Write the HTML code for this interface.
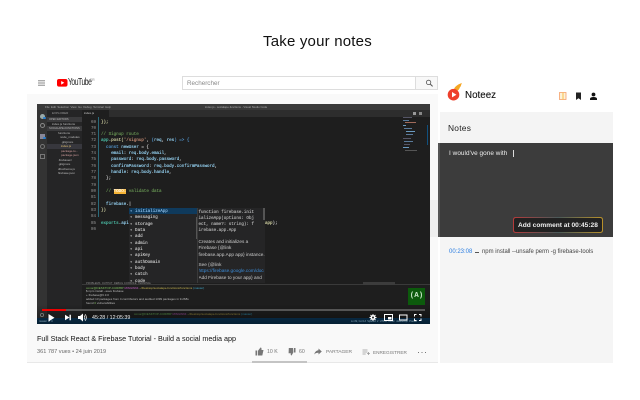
<!DOCTYPE html>
<html><head><meta charset="utf-8"><style>
*{box-sizing:border-box}
html,body{margin:0;padding:0}
body{width:640px;height:400px;overflow:hidden;background:#fff;position:relative;font-family:"Liberation Sans",sans-serif}
.a{position:absolute;white-space:pre}
.c{font-family:"Liberation Mono",monospace;font-size:4.22px;line-height:6.33px;color:#9cdcfe;-webkit-text-stroke:.12px}
.n{color:#7d7d7d;width:12px;text-align:right}
.s{font-size:3px;line-height:3px;color:#bbb}
.m{font-family:"Liberation Mono",monospace;font-size:4.22px;line-height:6.33px;color:#ccc;-webkit-text-stroke:.12px}
.d{font-size:4.7px;line-height:6.4px;color:#ccc}
b{font-weight:normal}
.k{color:#569cd6}.y{color:#dcdcaa}.o{color:#ce9178}.g{color:#6a9955}.t{color:#4ec9b0}.w{color:#d4d4d4}
.mm{position:absolute;height:1.4px}
</style></head><body>
<div class="a" style="left:263px;top:33px;font-size:15px;letter-spacing:.2px;color:#111;line-height:18px">Take your notes</div>

<div class="a" style="left:27px;top:94px;width:411px;height:268px;background:#f9f9f9"></div>
<div class="a" style="left:38px;top:80px;width:7px;height:6px;background:linear-gradient(#aaa 0 1px,#ddd 1px 2.5px,#aaa 2.5px 3.5px,#ddd 3.5px 5px,#aaa 5px)"></div>
<svg class="a" style="left:57px;top:78px" width="11" height="10"><rect y="1" width="10.500" height="7.600" rx="2" fill="#f00"/><path d="M4.200 3v3.600l3.100-1.800z" fill="#fff"/></svg>
<div class="a" style="left:68px;top:77px;font-size:10px;letter-spacing:-.7px;color:#222;transform:scaleX(.68);transform-origin:0 0;line-height:12px">YouTube</div>
<div class="a" style="left:90px;top:78px;font-size:3.500px;line-height:5px;color:#888">FR</div>
<div class="a" style="left:182px;top:76px;width:234px;height:14px;border:1px solid #ddd;background:#fff"></div>
<div class="a" style="left:187px;top:78.500px;font-size:6.300px;color:#888;line-height:10px">Rechercher</div>
<div class="a" style="left:415px;top:76px;width:23px;height:14px;border:1px solid #ddd;background:#f8f8f8"></div>
<svg class="a" style="left:425px;top:79px" width="9" height="9"><circle cx="3.600" cy="3.400" r="2.200" fill="none" stroke="#555" stroke-width=".8"/><path d="M5.200 5l2.400 2.400" stroke="#555"/></svg>

<div id="v" class="a" style="left:37px;top:104px;width:393px;height:220px;background:#1e1e1e;overflow:hidden;filter:blur(.25px)">
 <div class="a" style="left:0;top:0;width:393px;height:6px;background:#3a3a3a"></div>
 <div class="a s" style="left:8px;top:1.500px;font-size:2.800px;color:#aaa">File  Edit  Selection  View  Go  Debug  Terminal  Help</div>
 <div class="a s" style="left:168px;top:1.500px;font-size:2.800px;color:#aaa">index.js - socialape-functions - Visual Studio Code</div>
 <div class="a" style="left:0;top:6px;width:10px;height:208px;background:#333"></div>
 <div class="a" style="left:10px;top:6px;width:35px;height:208px;background:#252526"></div>
 <div class="a" style="left:45px;top:6px;width:348px;height:7px;background:#2d2d2d"></div>
 <div class="a" style="left:45px;top:6px;width:27px;height:7px;background:#1e1e1e"></div>
 <div class="a s" style="left:47px;top:8px;color:#ccc">index.js</div>
 <div class="a" style="left:2.500px;top:9.500px;width:5px;height:5px;border-radius:50%;background:#9aa"></div>
 <div class="a" style="left:6px;top:12.500px;width:2.500px;height:2.500px;border-radius:50%;background:#2a80d0"></div>
 <div class="a" style="left:2.500px;top:18.500px;width:5px;height:5px;border-radius:50%;border:1px solid #888"></div>
 <div class="a" style="left:2.500px;top:29.500px;width:5px;height:5px;background:#889"></div>
 <div class="a" style="left:6px;top:32.500px;width:2.500px;height:2.500px;border-radius:50%;background:#2a80d0"></div>
 <div class="a" style="left:2.500px;top:39.500px;width:5px;height:5px;border-radius:50%;border:1px solid #777"></div>
 <div class="a" style="left:2.500px;top:49.500px;width:5px;height:5px;border:1px solid #777"></div>
 <div class="a s" style="left:15px;top:7.500px;color:#999">EXPLORER</div>
 <div class="a" style="left:10px;top:13px;width:35px;height:4.500px;background:#3a3a3c"></div>
 <div class="a s" style="left:12px;top:13.500px;font-size:2.600px">OPEN EDITORS</div>
 <div class="a s" style="left:15px;top:18.500px">index.js functions</div>
 <div class="a" style="left:10px;top:22px;width:35px;height:4.500px;background:#3a3a3c"></div>
 <div class="a s" style="left:12px;top:22.500px;font-size:2.600px">SOCIALAPE-FUNCTIONS</div>
 <div class="a s" style="left:21px;top:27.500px">functions</div>
 <div class="a s" style="left:23px;top:31.500px">node_modules</div>
 <div class="a s" style="left:24px;top:36.500px">.gitignore</div>
 <div class="a" style="left:10px;top:40px;width:35px;height:4.500px;background:#37373d"></div>
 <div class="a s" style="left:24px;top:40.500px;color:#e0c070">index.js</div>
 <div class="a s" style="left:24px;top:45.500px;color:#c99">package-lo...</div>
 <div class="a s" style="left:24px;top:49.500px;color:#c99">package.json</div>
 <div class="a s" style="left:21px;top:54.500px">.firebaserc</div>
 <div class="a s" style="left:21px;top:58.500px">.gitignore</div>
 <div class="a s" style="left:21px;top:63.500px">dbschema.js</div>
 <div class="a s" style="left:21px;top:67.500px">firebase.json</div>

 <div class="a" style="left:61px;top:13px;width:1px;height:100px;background:#2a6a7a"></div>
 <div class="a c n" style="left:47px;top:15.500px">69
70
71
72
73
74
75
76
77
78
79
80
81
82
83
84
85
86</div>
 <div class="a c" style="left:64px;top:15.500px"><b class="y">});</b>

<b class="g">// Signup route</b>
<b class="t">app</b><b class="w">.</b><b class="y">post(</b><b class="o">'/signup'</b><b class="w">, </b><b class="k">(</b>req<b class="w">, </b>res<b class="k">) =&gt; {</b>
  <b class="k">const</b> newUser <b class="w">= {</b>
    email<b class="w">:</b> req<b class="w">.</b>body<b class="w">.</b>email<b class="w">,</b>
    password<b class="w">:</b> req<b class="w">.</b>body<b class="w">.</b>password<b class="w">,</b>
    confirmPassword<b class="w">:</b> req<b class="w">.</b>body<b class="w">.</b>confirmPassword<b class="w">,</b>
    handle<b class="w">:</b> req<b class="w">.</b>body<b class="w">.</b>handle<b class="w">,</b>
  <b class="w">};</b>

  <b class="g">// <b style="background:#f5b335;color:#fff">TODO:</b> validate data</b>

  firebase<b class="w">.|</b>
<b class="y">})</b>

<b class="t">exports</b><b class="w">.</b>api                                                      <b class="y">app</b><b class="w">);</b></div>

 <div class="a" style="left:92px;top:104px;width:69px;height:75px;background:#252526"></div>
 <div class="a" style="left:92px;top:104px;width:68px;height:6.300px;background:#0f3a5c"></div>
 <div class="a m" style="left:93px;top:105px"><b style="color:#8fc0ea">▫ initializeApp</b>
▫ messaging
▫ storage
▫ Data
▫ add
▫ admin
▫ api
▫ apiKey
▫ authDomain
▫ body
▫ catch
▫ code</div>
 <div class="a" style="left:160px;top:104px;width:68px;height:75px;background:#252526;border-left:.5px solid #3a3a3a"></div>
 <div class="a" style="left:158.500px;top:113px;width:1.500px;height:22px;background:#555"></div>
 <div class="a" style="left:226px;top:104px;width:1.500px;height:12px;background:#555"></div>
 <div class="a m" style="left:161.500px;top:105.500px;color:#bbb">function firebase.init
ializeApp(options: Obj
ect, name?: string): f
irebase.app.App</div>
 <div class="a d" style="left:161.500px;top:135px">Creates and initializes a
Firebase {@link
firebase.app.App app} instance.</div>
 <div class="a d" style="left:161.500px;top:157.500px">See {@link</div>
 <div class="a d" style="left:161.500px;top:164px;width:65px;overflow:hidden;color:#3c8cd8">https://firebase.google.com/docs</div>
 <div class="a d" style="left:161.500px;top:170.500px;width:65px;overflow:hidden">Add Firebase to your app} and</div>

 <div class="a" style="left:45px;top:180px;width:348px;height:.5px;background:#3a3a3a"></div>
 <div class="a s" style="left:49px;top:178px;font-size:2.600px;color:#888">PROBLEMS  OUTPUT  DEBUG CONSOLE  TERMINAL</div>
 <div class="a" style="left:326px;top:177.500px;width:32px;height:3.500px;background:#3c3c3c"></div>
 <div class="a s" style="left:49px;top:182.500px;color:#7fbf5f;font-size:3px;line-height:3.900px">conor@DESKTOP-CUR88P <b style="color:#c060c0">MINGW64</b> <b style="color:#c0b050">~/Desktop/socialape-functions/functions</b> <b style="color:#40a0c0">(master)</b>
<b style="color:#bbb">$ npm install --save firebase</b>
<b style="color:#bbb">+ firebase@6.3.0</b>
<b style="color:#bbb">added 13 packages from 4 contributors and audited 1399 packages in 9.268s</b>
<b style="color:#bbb">found <b style="color:#7fbf5f">0</b> vulnerabilities</b></div>
 <div class="a s" style="left:97px;top:209px;color:#5f9f4f">conor@DESKTOP-CUR88P <b style="color:#a050a0">MINGW64</b> <b style="color:#a09040">~/Desktop/socialape-functions/functions</b> <b style="color:#3090b0">(master)</b></div>

 <div class="a" style="left:0;top:214px;width:393px;height:6px;background:#0b3a5e"></div>
 <div class="a" style="left:0;top:200px;width:393px;height:20px;background:linear-gradient(transparent,rgba(0,0,0,.45))"></div>
 <div class="a s" style="left:2px;top:216px;font-size:2.600px;color:#8ab">master  0  0</div>
 <div class="a s" style="left:314px;top:216px;color:#8ab;font-size:2.500px">Ln 82, Col 13  Spaces: 2  UTF-8  CRLF  JavaScript  Prettier</div>
 <div class="a" style="left:371px;top:184px;width:17px;height:17px;background:#0c5a0c;color:#c8e6c8;font:bold 7.500px/17px 'Liberation Mono',monospace;text-align:center">(A)</div>
 <div class="a" style="left:366px;top:13px;width:15px;height:35px">
<div class="mm" style="left:0;top:0;width:9px;background:#556"></div><div class="mm" style="left:0;top:3px;width:6px;background:#5a7a9a"></div><div class="mm" style="left:2px;top:5px;width:11px;background:#a06a5a"></div><div class="mm" style="left:0;top:8px;width:3px;background:#6a9ac0"></div><div class="mm" style="left:1px;top:11px;width:8px;background:#5a7a9a"></div><div class="mm" style="left:3px;top:14px;width:9px;background:#6a9ac0"></div><div class="mm" style="left:3px;top:17px;width:7px;background:#5a7a9a"></div><div class="mm" style="left:0;top:21px;width:8px;background:#556"></div><div class="mm" style="left:1px;top:24px;width:9px;background:#5a7a9a"></div><div class="mm" style="left:1px;top:27px;width:6px;background:#556"></div><div class="mm" style="left:0;top:30px;width:6px;background:#6a9ac0"></div><div class="mm" style="left:2px;top:33px;width:12px;background:#555"></div></div>
 <div class="a" style="left:389.500px;top:21px;width:1.500px;height:20px;background:#10507e"></div>
 <div class="a" style="left:376px;top:7.500px;width:3px;height:3px;background:#999"></div>
 <div class="a" style="left:382px;top:7.500px;width:3px;height:3px;background:#888"></div>

 <div class="a" style="left:5px;top:205.300px;width:383px;height:1.400px;background:#555"></div>
 <div class="a" style="left:5px;top:205.300px;width:24px;height:1.400px;background:#e00"></div>
 <svg class="a" style="left:0;top:208px" width="393" height="12">
  <circle cx="5" cy="3" r="1.600" fill="none" stroke="#777" stroke-width=".9"/>
  <path d="M11.500 2v7.500l6-3.750z" fill="#fff"/>
  <path d="M28 2.700v5.600l4.500-2.800zM32.500 2.700h1.400v5.600h-1.400z" fill="#fff"/>
  <path d="M41 4h2l3-2.500v8l-3-2.500h-2z" fill="#fff"/>
  <path d="M47 3.500a2.800 2.800 0 0 1 0 4M48 2.300a4.400 4.400 0 0 1 0 6.400" stroke="#fff" stroke-width=".7" fill="none"/>
  <path d="M336 2v7M332.500 5.500h7M333.500 3l5 5M338.500 3l-5 5" stroke="#fff" stroke-width=".9"/>
  <circle cx="336" cy="5.500" r="2.500" fill="#fff"/><circle cx="336" cy="5.500" r="1" fill="#222"/>
  <rect x="347.500" y="2.500" width="8" height="6" fill="none" stroke="#fff"/><rect x="351" y="5" width="3.500" height="2.500" fill="#fff"/>
  <rect x="362.500" y="3" width="7.500" height="5" fill="none" stroke="#fff"/>
  <path d="M377.500 4.500v-2h2M382 2.500h2v2M377.500 6.500v2h2M382 8.500h2v-2" stroke="#fff" fill="none"/>
 </svg>
 <div class="a" style="left:55px;top:209.500px;color:#eee;font-size:5.300px;line-height:8px">45:28 / 12:05:39</div>
</div>

<div class="a" style="left:37px;top:332.500px;font-size:7.200px;color:#111;line-height:12px">Full Stack React &amp; Firebase Tutorial - Build a social media app</div>
<div class="a" style="left:37px;top:348px;font-size:5.600px;color:#666;line-height:8px">361 787 vues • 24 juin 2019</div>
<svg class="a" style="left:255px;top:347px" width="10" height="10"><path d="M.5 3.500h1.700v5H.5zM3 8.500V3.800L5.500.5c1 0 1.200 1 1 2.500h2L7.300 8.500z" fill="#777"/></svg>
<div class="a" style="left:267px;top:348.500px;font-size:5.200px;color:#777;line-height:7px">10 K</div>
<svg class="a" style="left:288px;top:347px" width="10" height="10"><path d="M.8 1h4.300l.3 4.200L3.600 8.500c-1 0-1-1-.8-2.200H.6zM6 1h1.500v4.500H6z" fill="#777"/></svg>
<div class="a" style="left:299px;top:348.500px;font-size:5.200px;color:#777;line-height:7px">60</div>
<svg class="a" style="left:314px;top:348px" width="8" height="7"><path d="M4.500.5l3.300 3-3.300 3V4.800C2.500 4.800 1.200 5.300.3 6.500.6 4.300 2 2.500 4.500 2.200z" fill="#777"/></svg>
<div class="a" style="left:326px;top:348.500px;font-size:4.900px;color:#777;line-height:7px">PARTAGER</div>
<svg class="a" style="left:362px;top:349px" width="8" height="6"><path d="M.5 1h5M.5 3h5M.5 5h3.200M6.500 3v3M5 4.500h3" stroke="#999" stroke-width=".8"/></svg>
<div class="a" style="left:373px;top:348.500px;font-size:4.700px;color:#777;line-height:7px">ENREGISTRER</div>
<div class="a" style="left:418px;top:352px;width:8px;height:1.200px;background:linear-gradient(90deg,#777 0 1.200px,transparent 1.200px 3.400px,#777 3.400px 4.600px,transparent 4.600px 6.800px,#777 6.800px)"></div>
<div class="a" style="left:27px;top:362px;width:411px;height:1px;background:#e8e8e8"></div>
<div class="a" style="left:252px;top:361px;width:55px;height:2px;background:#c4c4c4"></div>
<div class="a" style="left:430px;top:200px;width:8px;height:37px;background:#efefef"></div>
<div class="a" style="left:438px;top:143px;width:2px;height:94px;background:#555"></div>

<div class="a" style="left:440px;top:112px;width:173px;height:31px;background:#f4f4f4"></div>
<div class="a" style="left:440px;top:143px;width:173px;height:94px;background:#3c3c3c"></div>
<div class="a" style="left:440px;top:237px;width:173px;height:126px;background:#f5f5f5"></div>

<svg class="a" style="left:447px;top:82px" width="18" height="20">
 <path d="M7 7C8.500 3.500 12 2 15 1 13.800 2.800 14.500 3.800 12.800 5.500 12.200 7.500 11 8.500 10 9z" fill="#f5a623"/>
 <circle cx="6.500" cy="12.700" r="5.800" fill="#ee3f2b"/>
 <path d="M5 10v5.400l4.400-2.700z" fill="#fff"/>
</svg>
<div class="a" style="left:465px;top:90px;font-size:9.800px;color:#111;line-height:12px;-webkit-text-stroke:.1px #111">Noteez</div>
<svg class="a" style="left:559px;top:92px" width="8" height="9"><rect x=".5" y=".5" width="6.500" height="7" fill="#fdf1d8" stroke="#f6a06a" stroke-width=".8"/><path d="M4 .5v7" stroke="#f6c04a"/></svg>
<svg class="a" style="left:575px;top:92px" width="7" height="9"><path d="M1 .5h5v7.500L3.500 6.300 1 8z" fill="#222"/></svg>
<svg class="a" style="left:589px;top:92px" width="9" height="9"><circle cx="4.500" cy="2.500" r="1.900" fill="#111"/><path d="M1 8V6.800C1 5.500 3 5 4.500 5S8 5.500 8 6.800V8z" fill="#111"/></svg>
<div class="a" style="left:448px;top:122px;font-size:8.400px;color:#222;line-height:12px;letter-spacing:.25px">Notes</div>
<div class="a" style="left:449px;top:149px;font-size:6.400px;color:#eee;line-height:9px;letter-spacing:.05px">I would've gone with</div>
<div class="a" style="left:513px;top:150px;width:.8px;height:7px;background:#ddd"></div>
<div class="a" style="left:513px;top:217px;width:90px;height:15.500px;border-radius:2.500px;padding:.8px;background:linear-gradient(90deg,#b53a3a,#4a5a5a 50%,#b8902a)"><div style="width:100%;height:100%;background:#222;border-radius:2px"></div></div>
<div class="a" style="left:518px;top:220.500px;font-size:6.600px;font-weight:bold;color:#eee;line-height:10px">Add comment at 00:45:28</div>
<div class="a" style="left:449px;top:248px;font-size:6px;color:#2a7de1;line-height:9px">00:23:08</div>
<div class="a" style="left:475px;top:252px;width:4px;height:.8px;background:#555"></div>
<div class="a" style="left:482px;top:248px;font-size:5.950px;color:#444;line-height:9px">npm install --unsafe perm -g firebase-tools</div>
</body></html>
